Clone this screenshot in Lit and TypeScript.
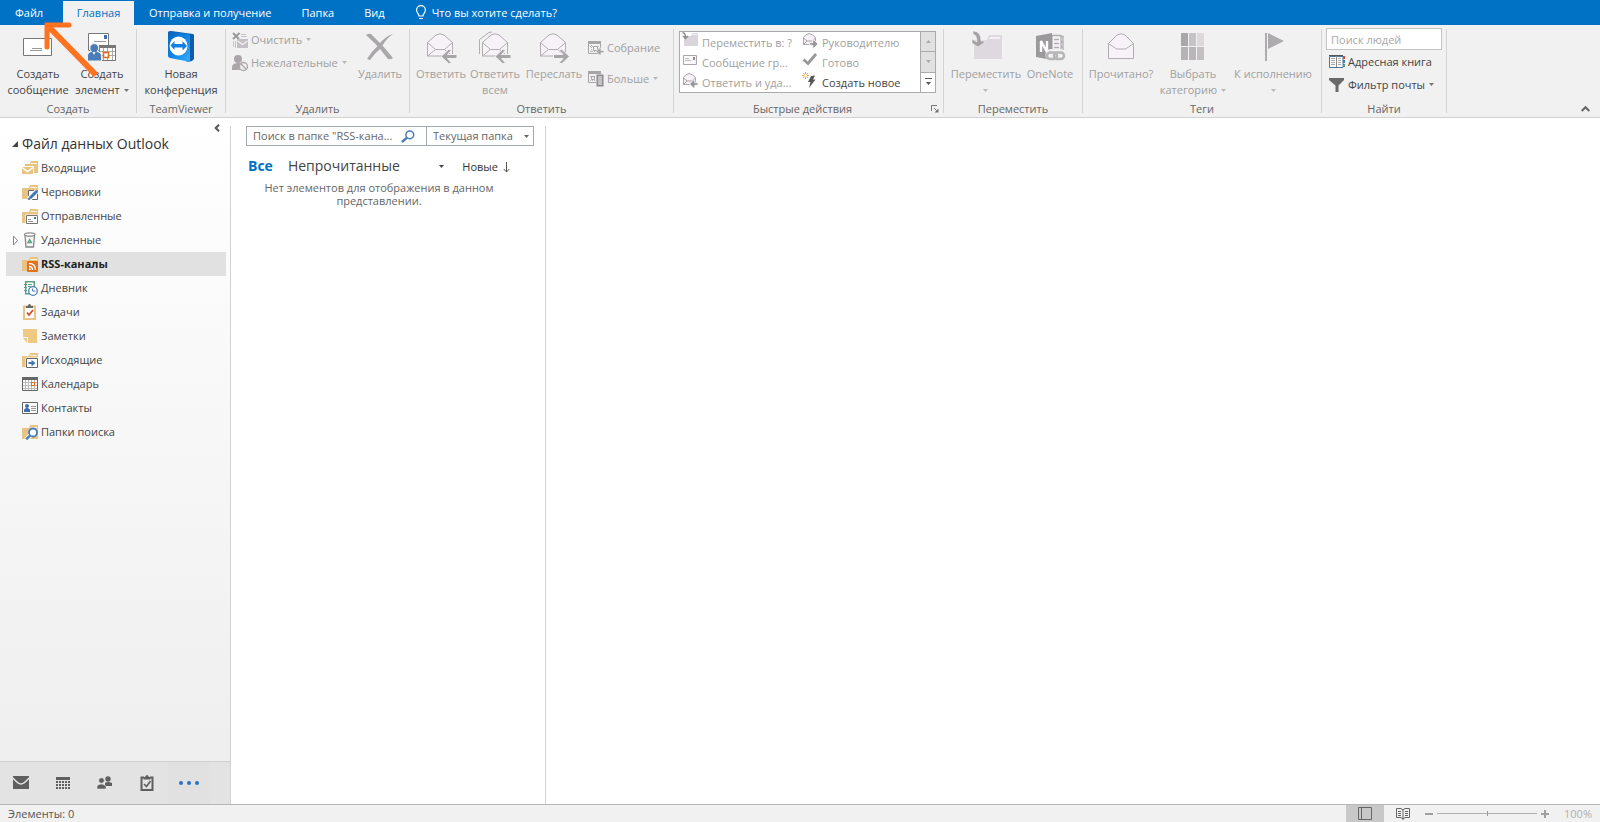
import { LitElement, html, svg, css, nothing } from "lit";
import { customElement, property } from "lit/decorators.js";

const folder = svg`<path fill="#e9c383" d="M0 4h7l1-3h8v14H0z"/><path stroke="#fdf3e0" d="M8.5 3.5H15"/>`;

const icons: Record<string, [number, number, unknown]> = {
  bulb: [12, 16, svg`<path fill="none" stroke="#fff" stroke-width="1.2" d="M4 11C4 8.500 1.600 8 1.600 5a4.400 4.400 0 0 1 8.800 0C10.400 8 8 8.500 8 11zM4 13.500h4"/>`],
  caret: [5, 3, svg`<path fill="currentColor" d="M0 0h5L2.500 3z"/>`],
  up: [5, 3, svg`<path fill="currentColor" d="M0 3h5L2.500 0z"/>`],
  more: [7, 8, svg`<path fill="#555" d="M0 0h7v1H0zM1 4h5L3.500 7z"/>`],
  message: [32, 32, svg`<path fill="#fff" stroke="#777" d="M1.500 8.500h28v17h-28z"/><path stroke="#999" d="M10 18.500h10M8 20.500h12"/>`],
  item: [32, 32, svg`<path fill="#fff" stroke="#777" d="M2.500 3.500h20v17h-20z"/><path fill="#3f6fb0" d="M18 5h3v4h-3z"/><path stroke="#999" d="M8 11.500h12"/>
    <path fill="#fff" stroke="#777" d="M13.500 15.500h16v15h-16z"/><path fill="#777" d="M13 15h17v3H13z"/><path stroke="#aaa" d="M14 21.500h15M14 25.500h15M17.500 18v12M21.500 18v12M26.500 18v12"/><path fill="#fff" stroke="#e06c1f" stroke-width="1.600" d="M17.500 22.500h5v5h-5z"/>
    <path fill="#4a7db8" stroke="#f1f1f1" d="M8 13.500a4.500 4.500 0 0 1 3 8c3 .500 4.500 2 4.500 4.500V31H1.500v-5c0-2.500 1.500-4 4-4.500a4.500 4.500 0 0 1 2.500-8z"/><path fill="#fff" d="m6.500 22 1.500 3 1.500-3z"/>`],
  conference: [32, 32, svg`<defs><linearGradient id="tv" x1="0" y1="0" x2="1" y2="1"><stop offset="0" stop-color="#0762b8"/><stop offset=".5" stop-color="#1184e6"/><stop offset="1" stop-color="#35aefc"/></linearGradient></defs>
    <path fill="#0a5fa8" d="m3 2 3-1 22 3 1 1v24l-2 2-5 1z"/><path fill="url(#tv)" d="M3 3q0-2 2-1.600L23 4q2 .300 2 2v24q0 2-2 1.600L5 28q-2-.400-2-2z"/><ellipse cx="13.500" cy="16" rx="9" ry="9.500" fill="#fff"/><path fill="#1281e0" d="m5.500 15.500 4-4.500v3h8v-3l4.500 5-4.500 4.500v-3h-8V20z"/>`],
  clean: [16, 16, svg`<path stroke="#999" stroke-width="2" d="m1 1 6 6M7.500 1 1 7"/><path stroke="#c9c4c9" d="M9 2.500h5M9 4.500h6M1.500 9v6M3.500 9v7"/><path fill="#c4bfc4" d="M5 7h11v9H5z"/><path fill="none" stroke="#f4f0f4" stroke-width="1.300" d="m5.500 9 5 3.500 5-3.500"/>`],
  junk: [16, 16, svg`<circle cx="6" cy="4" r="4" fill="#aaa6aa"/><path fill="#aaa6aa" d="M0 15v-3c0-2.500 2-3.500 5-4h2l2 .500L7.500 12 8 15z"/><circle cx="11.500" cy="11.500" r="4" fill="#f1f1f1" stroke="#aaa6aa" stroke-width="1.300"/><path stroke="#aaa6aa" stroke-width="1.300" d="m8.800 8.800 5.400 5.400"/>`],
  remove: [32, 32, svg`<path fill="#aaa7aa" d="M2 5q3-2 5-1l9 9q6-7 13-9-7 5-10.500 11.500L29 28q-3 2-5 1l-8-10q-6 5-10 11l-3-1q5-8 10.500-13z"/>`],
  reply: [32, 32, svg`<path fill="#f6f2f7" stroke="#b0acb0" d="M2.500 26V12.500L11 5q4-2.500 8 0l8.500 7.500V26z"/><path fill="none" stroke="#b0acb0" d="m2.500 12.500 8 7h9l8-7M2.500 26l8-6.500M27.500 26l-8-6.500"/><path fill="#a8a5a8" stroke="#f1f1f1" d="m16 26.500 7.500-7h3.500l-4.500 5H32v4h-9.500l4.500 5h-3.500z"/>`],
  replyAll: [32, 32, svg`<path fill="none" stroke="#b0acb0" d="M.500 24V9.500L10 2.500l3-.500"/><path fill="#f6f2f7" stroke="#b0acb0" d="M3.500 26V12.500L12 5q4-2.500 8 0l8.500 7.500V26z"/><path fill="none" stroke="#b0acb0" d="m3.500 12.500 8 7h9l8-7M3.500 26l8-6.500M28.500 26l-8-6.500"/><path fill="#a8a5a8" stroke="#f1f1f1" d="m16 26.500 7.500-7h3.500l-4.500 5H32v4h-9.500l4.500 5h-3.500z"/>`],
  forward: [32, 32, svg`<path fill="#f6f2f7" stroke="#b0acb0" d="M2.500 26V12.500L11 5q4-2.500 8 0l8.500 7.500V26z"/><path fill="none" stroke="#b0acb0" d="m2.500 12.500 8 7h9l8-7M2.500 26l8-6.500M27.500 26l-8-6.500"/><path fill="#a8a5a8" stroke="#f1f1f1" d="m31.500 26.500-7.500-7h-3.500l4.500 5h-9.500v4H25l-4.500 5H24z"/>`],
  read: [32, 32, svg`<path fill="#f6f2f7" stroke="#b0acb0" d="M3.500 28.500V13.500L12 5q4-2.500 8 0l8.500 8.500v15z"/><path fill="none" stroke="#b0acb0" d="m3.500 13.500 8 5.500h9l8-5.500"/>`],
  meeting: [16, 16, svg`<path fill="none" stroke="#a8a5a8" d="M.500 1.500h12v12H.500z"/><path fill="#a8a5a8" d="M0 1h13v3H0z"/><path stroke="#b5b2b5" stroke-dasharray="1 1" d="M2 6.500h10M2 11.500h6M3.500 5v8"/><path fill="none" stroke="#a8a5a8" d="M5.500 6.500h4v4h-4z"/><path fill="#a8a5a8" stroke="#f1f1f1" stroke-width=".7" d="m8 11.500 3.500-3.500H13v2.500h3v2.300h-3V15h-1.500z"/>`],
  meetingMore: [16, 16, svg`<path fill="none" stroke="#a8a5a8" d="M.500.500h12v11H.500z"/><path fill="#a8a5a8" d="M0 0h13v3H0z"/><path stroke="#b5b2b5" stroke-dasharray="1 1" d="M2 5.500h6M2 9.500h6"/><path fill="none" stroke="#a8a5a8" d="M3.500 5.500h3v3h-3z"/><path fill="#d8d5d8" stroke="#f1f1f1" stroke-width="3" d="M9.500 4.500h5v10h-5z"/><path fill="#c4c1c4" stroke="#8f8c8f" stroke-width="1.500" d="M9.200 4.200h5.600v10.600H9.200z"/>`],
  moveSmall: [16, 16, svg`<path fill="#dad5da" d="M2 4h7l1-3h6v13H2z"/><path stroke="#f6f2f6" d="M9.500 2.500H15"/><path fill="none" stroke="#8f8c8f" stroke-width="1.500" d="M.500.800q3 0 3 5M1 4l2.500 2.500L6 4"/>`],
  mailSmall: [16, 16, svg`<path fill="#faf8fa" stroke="#aaa6aa" d="M1.500 3.500h13v9h-13z"/><path fill="#8f8c8f" d="M11 5h2v3h-2z"/><path stroke="#bbb" d="M3 6.500h4M3 8.500h6"/>`],
  replySmall: [16, 16, svg`<path fill="#f6f2f7" stroke="#aaa6aa" d="M1.500 12.500v-7Q3 2.500 7 1.500q4 1 6.500 4v7z"/><path fill="none" stroke="#aaa6aa" d="m1.500 6 3.500 3h5l3.500-3M1.500 12.500 5 9"/><path fill="#9a979a" stroke="#fff" stroke-width=".8" d="m7.500 12 4-4h1.300v2.700H16v2.600h-3.200V16h-1.300z"/>`],
  forwardSmall: [16, 16, svg`<path fill="#f6f2f7" stroke="#aaa6aa" d="M1.500 12.500v-7Q3 2.500 7 1.500q4 1 6.500 4v7z"/><path fill="none" stroke="#aaa6aa" d="m1.500 6 3.500 3h5l3.500-3M1.500 12.500 5 9"/><path fill="#9a979a" stroke="#fff" stroke-width=".8" d="m16 12-4-4h-1.300v2.700H7.500v2.600h3.200V16H12z"/>`],
  check: [16, 16, svg`<path fill="none" stroke="#9a979a" stroke-width="2.800" d="M1.500 7.500 6 11.500 14 2"/>`],
  bolt: [16, 16, svg`<path fill="#555" d="m9 4 4-.500-2 4h2.500L7 16l1.500-6H6z"/><path stroke="#e8a33d" d="M3.500 0v7M0 3.500h7M1 1l5 5M6 1 1 6"/><circle cx="3.500" cy="3.500" r="1.500" fill="#fff6df"/>`],
  move: [32, 32, svg`<path fill="#ded9de" d="M4 10h13l2-5h13v24H4z"/><path fill="#f4f0f4" d="M20 7h10v2H19z"/><path fill="#a5a2a5" stroke="#f1f1f1" stroke-width=".6" d="M3 1q8 0 8 10h3v2l-6 4-6-4v-4l5 3Q7 5 3 4z"/>`],
  onenote: [32, 32, svg`<path fill="#f6f3f6" stroke="#b0adb0" stroke-width="1.300" d="M18 5.500h9v18h-9zM20 9.500h5M20 13.500h5M20 17.500h5"/><path fill="none" stroke="#b0adb0" stroke-width="1.300" d="M27 6.500h2v5h-2M27 12h2v5h-2M27 17h2v4h-2"/><path fill="#9c999c" d="M2 6 18 3v27L2 27z"/><path fill="none" stroke="#fff" stroke-width="2.400" d="M7 22V11l6 11V11"/><g fill="none"><path stroke="#f1f1f1" stroke-width="6" d="M22 28h-4q-4-.500-3.500-3.500T19 22h2q4 .500 3.500 3.500M20 24.500q1-2.500 4-2.500h2q4 .500 3.500 3.500T25 29h-1"/><rect x="13" y="22.500" width="10" height="6.500" rx="3.250" stroke="#b8b5b8" stroke-width="2.500"/><rect x="20" y="22.500" width="10" height="6.500" rx="3.250" stroke="#b8b5b8" stroke-width="2.500"/></g>`],
  category: [32, 32, svg`<path fill="#aaa7aa" d="M4 3h7v13H4z"/><path fill="#c6c2c6" d="M12 3h7v13h-7z"/><path fill="#dcd8dc" d="M20 3h7v13h-7z"/><path fill="#b6b3b6" d="M4 17h7v13H4z"/><path fill="#b9b6b9" d="M12 17h7v13h-7z"/><path fill="#c2bec2" d="M20 17h7v13h-7z"/>`],
  flag: [32, 32, svg`<path fill="#aeabae" d="M8 3h2v28H8zM11 3l16 8-16 8z"/>`],
  book: [16, 16, svg`<path fill="#fff" stroke="#46769c" d="M.500 2.500H6q1 0 1.500.500.500-.500 1.500-.500h5v11H.500z"/><path stroke="#555" d="M0 1.500h14"/><path stroke="#888" d="M7.500 2v11"/><path stroke="#aaa" d="M2 4.500h4M2 6.500h4M2 8.500h4M2 10.500h4M9 4.500h3M9 6.500h3M9 8.500h3M9 10.500h3"/><path fill="#d0502e" d="M14 2h2v3h-2z"/><path fill="#3d78b0" d="M14 6h2v3h-2z"/><path fill="#4f9d75" d="M14 10h2v3h-2z"/>`],
  funnel: [16, 16, svg`<path fill="#6a6a6a" d="M0 1h15v2L9.500 8.500V15h-3V8.500L0 3z"/>`],
  collapse: [9, 6, svg`<path fill="none" stroke="#666" stroke-width="2" d="m.700 5 3.800-3.800L8.300 5"/>`],
  left: [6, 8, svg`<path fill="none" stroke="#555" stroke-width="2" d="M5 .700 1.700 4 5 7.300"/>`],
  launcher: [8, 8, svg`<path fill="none" stroke="#777" d="M.500 6V.500H6M3 3l3 3"/><path fill="#777" d="M7.500 3.500v4h-4z"/>`],
  open: [6, 6, svg`<path fill="#444" d="M6 0v6H0z"/>`],
  closed: [6, 9, svg`<path fill="#fff" stroke="#888" d="M1.500 0v9L5.500 4.500z"/>`],
  inbox: [16, 16, svg`<path fill="#e9c383" d="M3 4h5l1-3h7v12H3z"/><path stroke="#fdf3e0" d="M9 3.500h6"/><path fill="#e9c383" stroke="#fdfdfd" d="M-.500 6.500h12v8h-12z"/><path fill="none" stroke="#fff" stroke-width="1.500" d="m0 7.500 5.500 4 5.500-4"/>`],
  drafts: [16, 16, svg`${folder}<path fill="#fff" stroke="#666" d="M6.500 6.500h9v9h-9z"/><path stroke="#fff" stroke-width="5" d="m7 15 8-8"/><path stroke="#3f76b5" stroke-width="3" d="m8 14 7-7"/><path fill="#3f76b5" d="m6 16 1-3 2 2z"/>`],
  sent: [16, 16, svg`${folder}<path fill="#fff" stroke="#fff" stroke-width="3" d="M5 8h10v7H5z"/><path fill="#fff" stroke="#777" d="M4.500 7.500h11v8h-11z"/><path stroke="#999" d="M6 11.500h3M6 13.500h5"/><path fill="#3f76b5" d="M12 9h2v2h-2z"/>`],
  trash: [16, 16, svg`<path fill="#f7f7f7" stroke="#888" stroke-width="1.300" d="M3 3h9.500l-1 12h-7.500z"/><ellipse cx="7.700" cy="2.500" rx="5.200" ry="1.700" fill="#fff" stroke="#888" stroke-width="1.300"/><path fill="none" stroke="#5a9f80" stroke-width="1.300" d="m7.700 7.500 1.700 3H6z"/>`],
  rss: [16, 16, svg`${folder}<rect x="5" y="5" width="11" height="11" rx="1" fill="#e2721c"/><path fill="none" stroke="#fff" stroke-width="1.300" d="M7 7.500q6.500 0 6.500 6.500M7 10.500q3.500 0 3.500 3.500"/><circle cx="7.800" cy="13.300" r="1" fill="#fff"/>`],
  journal: [16, 16, svg`<path fill="#fff" stroke="#5a9f80" stroke-width="1.500" d="M3.700 1.700h8.600v12H3.700z"/><path stroke="#5a9f80" d="M2 4.500h3M2 7.500h3M2 10.500h3M6 4.500h4M6 6.500h3"/><circle cx="11" cy="11" r="4.300" fill="#fff" stroke="#4a7db8" stroke-width="1.300"/><path fill="none" stroke="#4a7db8" d="M10.500 8.500V11h3"/>`],
  tasks: [16, 16, svg`<path fill="#fff" stroke="#e9c383" stroke-width="2" d="M2 2.500h11V15H2z"/><path fill="#666" d="M4 2h2q0-2 1.500-2T9 2h2v2H4z"/><path fill="none" stroke="#d0502e" stroke-width="1.800" d="m5 8.500 2 2.500 4-5"/>`],
  notes: [16, 16, svg`<path fill="#edc983" d="M1 1h14v14H6V9H1z"/><path fill="#edc983" d="M1 10h4v5z"/>`],
  outbox: [16, 16, svg`${folder}<path fill="#fff" stroke="#fff" stroke-width="3" d="M5 7h10v8H5z"/><path fill="#fff" stroke="#666" d="M4.500 6.500h11v9h-11z"/><path fill="#3f76b5" d="M6.500 10h3V8l4 3-4 3.500V12h-3z"/>`],
  calendar: [16, 16, svg`<path fill="#fff" stroke="#666" d="M.500 1.500h15v13H.500z"/><path fill="#666" d="M0 1h16v3H0z"/><path stroke="#bbb" d="M1 6.500h14M1 9.500h14M1 12.500h14M3.500 4v10M6.500 4v10M9.500 4v10M12.500 4v10"/><path fill="#fff" stroke="#e2721c" stroke-width="1.200" d="M9.500 6.500h3v3h-3z"/>`],
  contacts: [16, 16, svg`<path fill="#fff" stroke="#666" d="M.500 2.500h15v11H.500z"/><circle cx="5" cy="6" r="2" fill="#3f6fa8"/><path fill="#3f6fa8" d="M2 12V9.500L4 8h2l2 1.500V12z"/><path stroke="#999" d="M9 6.500h5M9 8.500h5M9 10.500h5"/>`],
  search: [16, 16, svg`${folder}<circle cx="11" cy="8.500" r="4" fill="#fff" stroke="#4a7db8" stroke-width="1.800"/><path stroke="#fdfdfd" stroke-width="4.500" d="m8 11.500-4 4"/><path stroke="#4a7db8" stroke-width="2.500" d="m8.200 11.300-4 4"/>`],
  lens: [14, 13, svg`<circle cx="8.800" cy="4.800" r="3.900" fill="none" stroke="#4a7db8" stroke-width="1.500"/><path stroke="#4a7db8" stroke-width="2.400" d="m6 7.600-5 4.400"/>`],
  down: [7, 11, svg`<path fill="none" stroke="#555" d="M3.500 0v10M.700 7l2.800 3L6.300 7"/>`],
  navMail: [16, 16, svg`<path fill="#5f5f5f" d="M0 1h16v13H0z"/><path fill="none" stroke="#e3e3e3" stroke-width="1.400" d="M0 3q5 6 8 6t8-6"/>`],
  navCal: [16, 16, svg`<path fill="#5f5f5f" d="M1 2h14v3H1z"/><path stroke="#5f5f5f" stroke-width="2" stroke-dasharray="2 1" d="M1 7h14M1 10h14M1 13h14"/>`],
  navPeople: [16, 16, svg`<circle cx="11" cy="4" r="2.700" fill="#5f5f5f"/><path fill="#5f5f5f" d="M8 11V8q3-2 7 0v3z"/><circle cx="4.500" cy="5.500" r="2.700" fill="#5f5f5f" stroke="#e3e3e3" stroke-width=".6"/><path fill="#5f5f5f" stroke="#e3e3e3" stroke-width=".6" d="M0 14v-3q4-4 9 0v3z"/>`],
  navTasks: [16, 16, svg`<path fill="none" stroke="#5f5f5f" stroke-width="2" d="M5 2.500H2.500V15h11V2.500H11"/><path fill="#5f5f5f" d="M4.500 2H6q2-4 4 0h1.500v2.500h-7z"/><path fill="none" stroke="#5f5f5f" stroke-width="1.600" d="m5 9 2.500 2.500L11.500 6"/>`],
  navMore: [20, 4, svg`<circle cx="2" cy="2" r="2" fill="#2a73c4"/><circle cx="10" cy="2" r="2" fill="#2a73c4"/><circle cx="18" cy="2" r="2" fill="#2a73c4"/>`],
  viewNormal: [14, 13, svg`<path fill="none" stroke="#666" d="M.500.500h13v12H.500zM3.500.500v12"/>`],
  viewRead: [14, 13, svg`<path fill="none" stroke="#666" d="M.500 1.500H5L7 3l2-1.500h4.500v9H9L7 12l-2-1.500H.500zM7 2v11M2 4.500h3M2 6.500h3M2 8.500h3M9 4.500h3M9 6.500h3M9 8.500h3"/>`],
};

const icon = (name: string) => {
  const [w, h, body] = icons[name];
  return html`<svg class="icon icon-${name}" width=${w} height=${h} viewBox="0 0 ${w} ${h}" aria-hidden="true">${body}</svg>`;
};

const base = css`
  * { box-sizing: border-box; }
  button, input, select { font: inherit; color: inherit; border: 0; padding: 0; margin: 0; background: none; outline: 0; }
  button { white-space: nowrap; cursor: pointer; }
  button:disabled { cursor: default; }
  .icon { display: block; flex: none; overflow: visible; }
`;

@customElement("ribbon-button")
class RibbonButton extends LitElement {
  @property() icon = "";
  @property() label = "";
  @property() second = "";
  @property({ type: Boolean }) small = false;
  @property({ type: Boolean }) menu = false;
  @property({ type: Boolean }) disabled = false;

  static styles = [base, css`
    :host { display: block; flex: none; }
    button { color: #444; line-height: 16px; }
    button:disabled { color: #a0a0a0; }
    .icon-caret { color: #777; }
    button:disabled .icon-caret { color: #b8b8b8; }
    .large { display: flex; flex-direction: column; align-items: center; width: 100%; padding-top: 5px; }
    .large .text { margin-top: 4px; }
    .line { display: flex; align-items: center; justify-content: center; gap: 4px; min-height: 16px; }
    .small { display: flex; align-items: center; gap: 3px; height: 23px; }
  `];

  render() {
    const caret = this.menu ? icon("caret") : nothing;
    return this.small
      ? html`<button class="small" ?disabled=${this.disabled}>${icon(this.icon)}<span class="line">${this.label}${caret}</span></button>`
      : html`<button class="large" ?disabled=${this.disabled}>${icon(this.icon)}
          <span class="text"><span class="line">${this.label}</span><span class="line">${this.second}${caret}</span></span></button>`;
  }
}

@customElement("app-root")
class AppRoot extends LitElement {
  static styles = [base, css`
    :host { display: flex; flex-direction: column; height: 100vh; overflow: hidden; position: relative;
      font: 11px/16px "Open Sans", "Noto Sans", sans-serif; color: #444; background: #fff; }
    .tabs { display: flex; align-items: flex-end; height: 25px; background: #0072c6; color: #fff; flex: none; }
    .tabs button { height: 24px; padding: 0 15px; }
    .tabs .file { width: 63px; text-align: left; }
    .tabs .active { background: #f1f1f1; color: #0072c6; width: 71px; padding: 0; }
    .tabs .tell { display: flex; align-items: center; gap: 5px; }
    .ribbon { display: flex; height: 93px; background: #f1f1f1; border-bottom: 1px solid #d2d2d2; flex: none; }
    .group { display: flex; flex-direction: column; flex: none; }
    .sep { width: 1px; margin: 4px 0; background: #d4d4d4; flex: none; }
    .body { display: flex; height: 76px; }
    .caption { display: flex; justify-content: center; color: #666; height: 16px; }
    .stack { display: flex; flex-direction: column; flex: none; }
    .g-new { width: 136px; } .g-team { width: 88px; } .g-del { width: 183px; } .g-reply { width: 263px; }
    .g-quick { width: 269px; } .g-move { width: 138px; } .g-tags { width: 238px; } .g-find { width: 124px; }
    .g-new .body, .g-del .body { padding-left: 6px; }
    .g-reply .body, .g-find .body { padding-left: 4px; }
    .g-quick .body { padding-left: 5px; }
    .g-move .body, .g-tags .body { padding-left: 2px; }
    .w48 { width: 48px; } .w54 { width: 54px; } .w64 { width: 64px; } .w72 { width: 72px; } .w80 { width: 80px; } .w88 { width: 88px; }
    .del-stack { width: 124px; padding-top: 3px; }
    .reply-stack { padding: 11px 0 0 2px; gap: 8px; }
    .gallery { display: flex; width: 257px; height: 62px; margin-top: 6px; border: 1px solid #ababab; background: #fff; }
    .quick { display: grid; grid-template-columns: 120px 1fr; grid-auto-rows: 20px; flex: 1; padding-left: 2px; min-width: 0; }
    .quick button { display: flex; align-items: center; gap: 4px; color: #a0a0a0; text-align: left; }
    .quick .icon { align-self: flex-start; }
    .quick .on { color: #444; }
    .quick .name { padding-top: 2px; }
    .scroll { display: flex; flex-direction: column; width: 15px; border-left: 1px solid #ababab; }
    .scroll button { display: flex; align-items: center; justify-content: center; flex: 1; background: #e1e1e1; color: #aaa; }
    .scroll button + button { border-top: 1px solid #ababab; }
    .scroll .expand { background: #fff; }
    .caption .launch { margin: 4px 4px 0 0; height: 8px; }
    .caption .title { flex: 1; text-align: center; }
    .find { padding-top: 3px; width: 116px; }
    .find input { height: 22px; border: 1px solid #c3c3c3; background: #fff; padding: 0 4px; width: 100%; }
    .find ribbon-button { padding-left: 3px; }
    input::placeholder { color: #a8a8a8; opacity: 1; }
    .fold { align-self: flex-end; margin: 0 10px 5px auto; height: 6px; }
    .main { display: flex; flex: 1; min-height: 0; }
    .side { display: flex; flex-direction: column; width: 230px; flex: none; background: linear-gradient(#fff, #efefef 630px); }
    .hide { align-self: flex-end; height: 8px; margin: 6px 10px 0 0; }
    .account { display: flex; align-items: center; gap: 4px; height: 24px; padding-left: 12px; color: #333; font-size: 14px; line-height: 20px; }
    .folders { list-style: none; margin: 0 4px 0 6px; padding: 0; flex: 1; }
    .folders li { display: flex; align-items: center; height: 24px; padding-left: 6px; }
    .folders a { display: flex; align-items: center; gap: 3px; color: inherit; text-decoration: none; }
    .folders .twist { width: 10px; height: 9px; }
    .folders .sel { background: #e1e1e1; font-weight: 700; color: #222; }
    .nav { display: flex; align-items: center; height: 43px; background: #e3e3e3; border-top: 1px solid #cfcfcf; }
    .nav button { display: flex; align-items: center; justify-content: center; width: 42px; height: 100%; }
    .nav .dots { background: #e1e1e1; }
    .list { width: 316px; flex: none; margin-top: 8px; border: solid #d2d2d2; border-width: 0 1px; padding-left: 15px; }
    .search { display: flex; width: 288px; height: 20px; border: 1px solid #a5a9b5; color: #666; }
    .query { display: flex; align-items: center; width: 180px; border-right: 1px solid #a5a9b5; padding: 0 11px 0 6px; }
    .query input { flex: 1; min-width: 0; }
    .query input::placeholder { color: #666; }
    .scope { display: flex; align-items: center; flex: 1; padding: 0 4px 0 6px; }
    .scope select { appearance: none; flex: 1; min-width: 0; }
    .filters { display: flex; align-items: center; margin-top: 10px; height: 20px; line-height: 20px; font-size: 14px; padding-left: 2px; }
    .all { color: #0072c6; font-weight: 700; margin-right: 15px; }
    .unread { margin-right: auto; }
    .sort { display: flex; align-items: center; gap: 5px; font-size: 11px; margin: 2px 35px 0 18px; color: #333; }
    .empty { width: 260px; margin: 5px 0 0 3px; text-align: center; line-height: 13px; color: #666; }
    .status { display: flex; align-items: center; height: 18px; border-top: 1px solid #b8b8b8; background: #f1f1f1; padding: 0 8px; flex: none; color: #555; }
    .status .count { margin-right: auto; }
    .status .view { display: flex; align-items: center; justify-content: center; width: 38px; height: 17px; }
    .status .on { background: #c8c8c8; }
    .zoomer { display: flex; align-items: center; gap: 4px; margin: 0 15px 0 3px; color: #999; }
    .zoomer button { width: 8px; height: 8px; background: linear-gradient(#a0a0a0, #a0a0a0) center / 8px 2px no-repeat; }
    .zoomer .plus { background: linear-gradient(#a0a0a0, #a0a0a0) center / 8px 2px no-repeat, linear-gradient(#a0a0a0, #a0a0a0) center / 2px 8px no-repeat; }
    .zoomer input { appearance: none; width: 100px; height: 5px; background: linear-gradient(#b0b0b0, #b0b0b0) center / 100% 1px no-repeat; }
    .zoomer input::-webkit-slider-thumb { appearance: none; width: 1px; height: 5px; background: #999; }
    .percent { color: #b0b0b0; }
    .pointer { position: absolute; left: 40px; top: 18px; pointer-events: none; }
  `];

  folders = [
    ["inbox", "Входящие"], ["drafts", "Черновики"], ["sent", "Отправленные"], ["trash", "Удаленные"],
    ["rss", "RSS-каналы"], ["journal", "Дневник"], ["tasks", "Задачи"], ["notes", "Заметки"],
    ["outbox", "Исходящие"], ["calendar", "Календарь"], ["contacts", "Контакты"], ["search", "Папки поиска"],
  ];

  quick = [
    ["moveSmall", "Переместить в: ?"], ["forwardSmall", "Руководителю"],
    ["mailSmall", "Сообщение гр..."], ["check", "Готово"],
    ["replySmall", "Ответить и уда..."], ["bolt", "Создать новое"],
  ];

  render() {
    return html`
      <nav class="tabs">
        <button class="file">Файл</button><button class="active">Главная</button>
        <button>Отправка и получение</button><button>Папка</button><button>Вид</button>
        <button class="tell">${icon("bulb")}Что вы хотите сделать?</button>
      </nav>
      <div class="ribbon">
        <section class="group g-new"><div class="body">
          <ribbon-button class="w64" icon="message" label="Создать" second="сообщение"></ribbon-button>
          <ribbon-button class="w64" icon="item" label="Создать" second="элемент" menu></ribbon-button>
        </div><div class="caption">Создать</div></section><i class="sep"></i>
        <section class="group g-team"><div class="body">
          <ribbon-button class="w88" icon="conference" label="Новая" second="конференция"></ribbon-button>
        </div><div class="caption">TeamViewer</div></section><i class="sep"></i>
        <section class="group g-del"><div class="body">
          <div class="stack del-stack">
            <ribbon-button small disabled menu icon="clean" label="Очистить"></ribbon-button>
            <ribbon-button small disabled menu icon="junk" label="Нежелательные"></ribbon-button>
          </div>
          <ribbon-button class="w48" disabled icon="remove" label="Удалить"></ribbon-button>
        </div><div class="caption">Удалить</div></section><i class="sep"></i>
        <section class="group g-reply"><div class="body">
          <ribbon-button class="w54" disabled icon="reply" label="Ответить"></ribbon-button>
          <ribbon-button class="w54" disabled icon="replyAll" label="Ответить" second="всем"></ribbon-button>
          <ribbon-button class="w64" disabled icon="forward" label="Переслать"></ribbon-button>
          <div class="stack reply-stack">
            <ribbon-button small disabled icon="meeting" label="Собрание"></ribbon-button>
            <ribbon-button small disabled menu icon="meetingMore" label="Больше"></ribbon-button>
          </div>
        </div><div class="caption">Ответить</div></section><i class="sep"></i>
        <section class="group g-quick"><div class="body">
          <div class="gallery">
            <div class="quick">${this.quick.map(([i, t]) => html`<button class=${i === "bolt" ? "on" : ""}>${icon(i)}<span class="name">${t}</span></button>`)}</div>
            <div class="scroll">
              <button aria-label="Вверх" disabled>${icon("up")}</button>
              <button aria-label="Вниз" disabled>${icon("caret")}</button>
              <button class="expand" aria-label="Дополнительно">${icon("more")}</button>
            </div>
          </div>
        </div><div class="caption"><span class="title">Быстрые действия</span><button class="launch" aria-label="Параметры">${icon("launcher")}</button></div></section><i class="sep"></i>
        <section class="group g-move"><div class="body">
          <ribbon-button class="w80" disabled menu icon="move" label="Переместить"></ribbon-button>
          <ribbon-button class="w48" disabled icon="onenote" label="OneNote"></ribbon-button>
        </div><div class="caption">Переместить</div></section><i class="sep"></i>
        <section class="group g-tags"><div class="body">
          <ribbon-button class="w72" disabled icon="read" label="Прочитано?"></ribbon-button>
          <ribbon-button class="w72" disabled menu icon="category" label="Выбрать" second="категорию"></ribbon-button>
          <ribbon-button class="w88" disabled menu icon="flag" label="К исполнению"></ribbon-button>
        </div><div class="caption">Теги</div></section><i class="sep"></i>
        <section class="group g-find"><div class="body">
          <div class="stack find">
            <input type="text" aria-label="Поиск людей" placeholder="Поиск людей">
            <ribbon-button small icon="book" label="Адресная книга"></ribbon-button>
            <ribbon-button small menu icon="funnel" label="Фильтр почты"></ribbon-button>
          </div>
        </div><div class="caption">Найти</div></section><i class="sep"></i>
        <button class="fold" aria-label="Свернуть ленту">${icon("collapse")}</button>
      </div>
      <div class="main">
        <aside class="side">
          <button class="hide" aria-label="Свернуть область папок">${icon("left")}</button>
          <div class="account">${icon("open")}Файл данных Outlook</div>
          <ul class="folders">${this.folders.map(([i, t]) => html`
            <li class=${i === "rss" ? "sel" : ""}><span class="twist">${i === "trash" ? icon("closed") : nothing}</span><a href="#">${icon(i)}${t}</a></li>`)}
          </ul>
          <nav class="nav">
            <button aria-label="Почта">${icon("navMail")}</button><button aria-label="Календарь">${icon("navCal")}</button>
            <button aria-label="Люди">${icon("navPeople")}</button><button aria-label="Задачи">${icon("navTasks")}</button>
            <button class="dots" aria-label="Ещё">${icon("navMore")}</button>
          </nav>
        </aside>
        <section class="list">
          <div class="search">
            <div class="query"><input type="text" aria-label="Поиск" placeholder='Поиск в папке "RSS-кана...'>${icon("lens")}</div>
            <div class="scope"><select aria-label="Область поиска"><option>Текущая папка</option></select>${icon("caret")}</div>
          </div>
          <div class="filters"><button class="all">Все</button><button class="unread">Непрочитанные</button>${icon("caret")}
            <button class="sort">Новые ${icon("down")}</button></div>
          <p class="empty">Нет элементов для отображения в данном представлении.</p>
        </section>
      </div>
      <footer class="status">
        <span class="count">Элементы: 0</span>
        <button class="view on" aria-label="Обычный">${icon("viewNormal")}</button>
        <button class="view" aria-label="Чтение">${icon("viewRead")}</button>
        <div class="zoomer"><button aria-label="Уменьшить"></button><input type="range" aria-label="Масштаб" min="0" max="200" value="100"><button class="plus" aria-label="Увеличить"></button></div>
        <span class="percent">100%</span>
      </footer>
      <svg class="pointer" width="60" height="60" viewBox="0 0 60 60" aria-hidden="true">
        <path fill="none" stroke="#ff7320" stroke-width="5" stroke-linecap="round" d="M7 29V7h22M8 8"/><path stroke="#ff7320" stroke-width="6" d="m8 8 48 49"/>
      </svg>`;
  }
}
